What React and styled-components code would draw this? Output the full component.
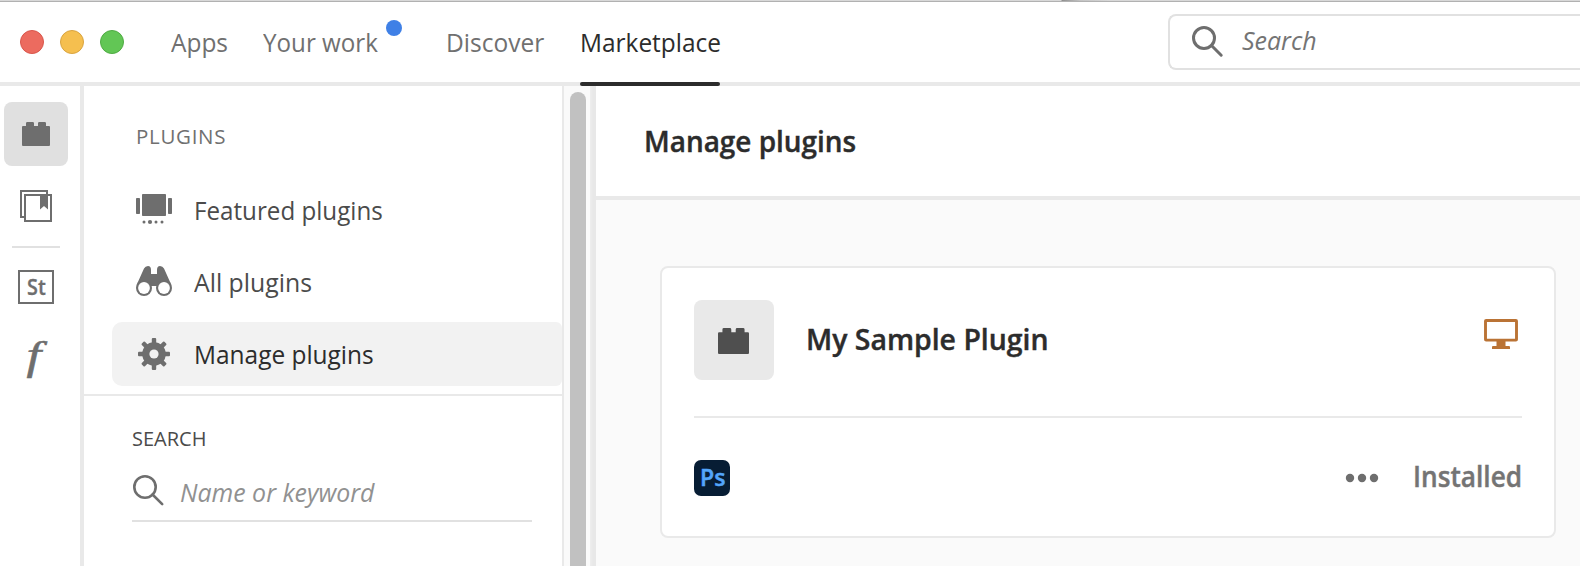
import React from 'react';
import styled, { createGlobalStyle } from 'styled-components';

const Global = createGlobalStyle`
  * { box-sizing: border-box; }
  html, body { margin: 0; background: #fff; overflow: hidden; }
  body { font-family: 'Open Sans', 'Noto Sans', sans-serif; color: #4b4b4b; }
  svg { display: block; flex: none; }
`;

const Window = styled.div`
  width: 1580px;
  height: 566px;
  display: flex;
  flex-direction: column;
  overflow: hidden;
`;

const Backdrop = styled.div`
  flex: none;
  height: 2px;
  border-bottom: 1px solid #b1b1b1;
  background: linear-gradient(90deg, #d8d8d8 1061px, #8f8f8f 1062px, #c4c4c4 1080px, #d8d8d8 1110px);
`;

const Header = styled.header`
  flex: none;
  height: 84px;
  display: flex;
  align-items: flex-start;
  border-bottom: 4px solid #e9e9e9;
`;

const Lights = styled.div`
  display: flex;
  align-items: center;
  gap: 16px;
  width: 171px;
  height: 80px;
  padding-left: 20px;
`;

const Light = styled.span`
  width: 24px;
  height: 24px;
  border-radius: 50%;
  background: ${p => p.$fill};
  border: 1px solid ${p => p.$edge};
`;

/* Condensed run of text; $stretch is the horizontal scale. */
const Label = styled.span`
  display: inline-block;
  white-space: pre;
  transform: scaleX(${p => p.$stretch || 1});
  transform-origin: left center;
`;

const Tabs = styled.nav`
  display: flex;
  flex: 1;
`;

const Tab = styled.a`
  position: relative;
  flex: none;
  width: ${p => p.$width}px;
  margin-right: ${p => p.$gap || 0}px;
  height: 84px;
  line-height: 80px;
  font-size: 26px;
  color: ${p => (p.$active ? '#2c2c2c' : '#707070')};
  &::after {
    content: '';
    display: ${p => (p.$active ? 'block' : 'none')};
    position: absolute;
    left: 0;
    right: 0;
    bottom: 0;
    height: 4px;
    border-radius: 2px;
    background: #2c2c2c;
  }
`;

const Unread = styled.i`
  position: absolute;
  top: 18px;
  right: -8px;
  width: 16px;
  height: 16px;
  border-radius: 50%;
  background: #3f80e6;
`;

const GlobalSearch = styled.div`
  flex: none;
  display: flex;
  align-items: center;
  gap: 18px;
  width: 412px;
  height: 56px;
  margin-top: 12px;
  padding: 0 0 4px 22px;
  border: 2px solid #e1e1e1;
  border-right: 0;
  border-radius: 8px 0 0 8px;
  font-size: 26px;
  line-height: 40px;
  font-style: italic;
  color: #747474;
  svg { margin-top: 4px; }
`;

const Body = styled.div`
  flex: 1;
  display: flex;
  min-height: 0;
`;

const Rail = styled.aside`
  flex: none;
  width: 84px;
  border-right: 4px solid #e9e9e9;
  padding: 16px 0 0 4px;
  display: flex;
  flex-direction: column;
`;

const RailItem = styled.div`
  width: 64px;
  height: 64px;
  margin-bottom: ${p => p.$after}px;
  display: flex;
  align-items: center;
  justify-content: center;
  border-radius: 8px;
  background: ${p => (p.$active ? '#e0e0e0' : 'transparent')};
  color: #6e6e6e;
`;

const RailRule = styled.hr`
  width: 48px;
  height: 2px;
  margin: 0 0 7px 8px;
  border: 0;
  background: #e1e1e1;
`;

const StockBadge = styled.span`
  width: 36px;
  height: 34px;
  border: 2px solid #6e6e6e;
  font-size: 22px;
  font-weight: 600;
  -webkit-text-stroke: 0.3px currentColor;
  line-height: 29px;
  padding-left: 7px;
`;

const FontGlyph = styled.span`
  font: italic 39px/58px 'Liberation Serif', serif;
  height: 64px;
  padding-right: 4px;
  transform: scaleX(1.35);
  -webkit-text-stroke: 0.5px #6e6e6e;
`;

const Side = styled.section`
  flex: none;
  width: 480px;
  border-right: 2px solid #e9e9e9;
`;

const SideHeading = styled.h2`
  margin: 0;
  padding: 34px 0 0 52px;
  height: 92px;
  font-size: 20.5px;
  font-weight: 400;
  line-height: 32px;
  letter-spacing: 0.7px;
  color: #707070;
`;

const SideNav = styled.div`
  display: flex;
  flex-direction: column;
  gap: 8px;
  padding: 0 0 8px 28px;
  border-bottom: 2px solid #e9e9e9;
`;

const SideItem = styled.a`
  display: flex;
  align-items: center;
  gap: 22px;
  height: 64px;
  padding-left: 24px;
  border-radius: 10px 6px 6px 10px;
  font-size: 26px;
  line-height: 64px;
  background: ${p => (p.$active ? '#f2f2f2' : 'transparent')};
  color: ${p => (p.$active ? '#2c2c2c' : '#4b4b4b')};
`;

const Filter = styled.div`
  padding: 27px 30px 0 48px;
`;

const FilterTitle = styled.div`
  height: 32px;
  font-size: 20px;
  line-height: 32px;
`;

const FilterField = styled.div`
  display: flex;
  align-items: center;
  gap: 15px;
  height: 67px;
  padding-top: 9px;
  border-bottom: 2px solid #e1e1e1;
  font-size: 26px;
  line-height: 40px;
  font-style: italic;
  color: #919191;
  svg { margin: -3px 0 0 1px; }
`;

const ScrollTrack = styled.div`
  flex: none;
  width: 32px;
  padding: 6px 0 0 6px;
  background: linear-gradient(90deg, #fafafa 26px, #eeeeee 26px, #e8e8e8 29px);
`;

const ScrollThumb = styled.div`
  width: 16px;
  height: 100%;
  border-radius: 8px 8px 0 0;
  background: #c1c1c1;
`;

const Main = styled.main`
  flex: 1;
  min-width: 0;
  background: #fafafa;
`;

const PageTitle = styled.h1`
  margin: 0;
  height: 114px;
  padding-left: 48px;
  border-bottom: 4px solid #e9e9e9;
  background: #fff;
  font-size: 29px;
  font-weight: 600;
  -webkit-text-stroke: 0.4px currentColor;
  line-height: 110px;
  color: #2c2c2c;
`;

const Card = styled.article`
  width: 896px;
  height: 272px;
  margin: 66px 0 0 64px;
  padding: 32px;
  border: 2px solid #e9e9e9;
  border-radius: 8px;
  background: #fff;
`;

const CardTop = styled.div`
  display: flex;
  align-items: center;
  height: 118px;
  padding-bottom: 36px;
  border-bottom: 2px solid #e9e9e9;
`;

const PluginTile = styled.div`
  width: 80px;
  height: 80px;
  display: flex;
  align-items: center;
  justify-content: center;
  padding: 2px 2px 0 0;
  border-radius: 8px;
  background: #e9e9e9;
  color: #4f4f4f;
`;

const PluginName = styled.h3`
  flex: 1;
  margin: 0;
  padding: 0 0 3px 32px;
  font-size: 29px;
  font-weight: 600;
  -webkit-text-stroke: 0.4px currentColor;
  line-height: 40px;
  color: #2c2c2c;
`;

const DesktopMark = styled.div`
  padding: 0 4px 12px 0;
`;

const CardBottom = styled.div`
  display: flex;
  align-items: center;
  height: 120px;
`;

const AppBadge = styled.span`
  width: 36px;
  height: 36px;
  margin-right: auto;
  padding-left: 6px;
  border-radius: 7px;
  background: #071d34;
  color: #53a6fb;
  font-size: 24px;
  font-weight: 600;
  -webkit-text-stroke: 0.5px currentColor;
  line-height: 33px;
`;

const Status = styled.span`
  width: 109px;
  margin-left: 34px;
  padding-bottom: 5px;
  font-size: 28px;
  font-weight: 600;
  -webkit-text-stroke: 0.4px currentColor;
  line-height: 40px;
  color: #747474;
`;

const Brick = ({ w = 28, h = 24 }) => (
  <svg width={w} height={h} viewBox="0 0 28 24" preserveAspectRatio="none" fill="currentColor">
    <path d="M4 4V1.3Q4 0 5.3 0H10.7Q12 0 12 1.3V4H16V1.3Q16 0 17.3 0H22.7Q24 0 24 1.3V4H27Q28 4 28 5V23Q28 24 27 24H1Q0 24 0 23V5Q0 4 1 4Z" />
  </svg>
);

const Library = () => (
  <svg width="32" height="32" viewBox="0 0 32 32">
    <path d="M4 27H1V1H27V4" fill="none" stroke="#6e6e6e" strokeWidth="2" />
    <rect x="5" y="5" width="26" height="26" fill="none" stroke="#6e6e6e" strokeWidth="2" />
    <path d="M20 4H28V19.5L24 16L20 19.5Z" fill="#6e6e6e" />
  </svg>
);

const Magnifier = ({ stroke }) => (
  <svg width="32" height="32" viewBox="0 0 32 32" fill="none" stroke="#6e6e6e" strokeWidth={stroke}>
    <circle cx="12" cy="12" r={12 - stroke / 2} />
    <path d="M19.5 19.5L29.2 29.2" strokeLinecap="round" />
  </svg>
);

const Carousel = () => (
  <svg width="36" height="36" viewBox="0 0 36 36" fill="#6e6e6e">
    <rect x="0" y="6" width="4" height="16" rx="0.8" />
    <rect x="6" y="2" width="24" height="22" rx="0.8" />
    <rect x="32" y="6" width="4" height="16" rx="0.8" />
    <circle cx="8" cy="30" r="1.5" />
    <circle cx="14" cy="30" r="2.1" />
    <circle cx="20" cy="30" r="1.5" />
    <circle cx="26" cy="30" r="1.5" />
  </svg>
);

const Binoculars = () => (
  <svg width="36" height="36" viewBox="0 -2 36 36" fill="#6e6e6e">
    <path d="M0.7 18.8L8 2.6Q9.3 0 12 0Q15 0 15 4V8H21V4Q21 0 24 0Q26.7 0 28 2.6L35.3 18.8L28 22L20.6 20H15.4L8 22Z" />
    <circle cx="8" cy="22" r="8" />
    <circle cx="28" cy="22" r="8" />
    <circle cx="8" cy="22" r="5.9" fill="#fff" />
    <circle cx="28" cy="22" r="5.9" fill="#fff" />
  </svg>
);

const Gear = () => (
  <svg width="36" height="36" viewBox="-18 -18 36 36" fill="#6e6e6e">
    {[0, 45, 90, 135].map(a => (
      <rect key={a} x="-2.2" y="-16" width="4.4" height="32" rx="1" transform={`rotate(${a})`} />
    ))}
    <circle r="11.8" />
    <circle r="4.6" fill="#f2f2f2" />
  </svg>
);

const Monitor = () => (
  <svg width="34" height="30" viewBox="0 0 34 30">
    <rect x="1.5" y="1.5" width="31" height="19.6" rx="0.6" fill="none" stroke="#ba7335" strokeWidth="2.9" />
    <path d="M12.5 21.5H21.5V27H25Q26 27 26 28V30H8V28Q8 27 9 27H12.5Z" fill="#ba7335" />
  </svg>
);

const More = () => (
  <svg width="34" height="10" viewBox="0 0 34 10" fill="#6e6e6e">
    <circle cx="5" cy="5" r="4.2" />
    <circle cx="17" cy="5" r="4.2" />
    <circle cx="29" cy="5" r="4.2" />
  </svg>
);

export default function App() {
  return (
    <Window>
      <Global />
      <Backdrop />
      <Header>
        <Lights>
          <Light $fill="#ec6b5f" $edge="#d9564b" />
          <Light $fill="#f5bf4f" $edge="#d9a440" />
          <Light $fill="#62c655" $edge="#4fab43" />
        </Lights>
        <Tabs>
          <Tab $width={58} $gap={34}><Label $stretch={0.94}>Apps</Label></Tab>
          <Tab $width={131} $gap={52}><Label $stretch={0.93}>Your work</Label><Unread /></Tab>
          <Tab $width={98} $gap={36}><Label $stretch={0.943}>Discover</Label></Tab>
          <Tab $width={140} $active><Label $stretch={0.94}>Marketplace</Label></Tab>
        </Tabs>
        <GlobalSearch>
          <Magnifier stroke={3} />
          <Label $stretch={0.96}>Search</Label>
        </GlobalSearch>
      </Header>
      <Body>
        <Rail>
          <RailItem $active $after={8}><Brick /></RailItem>
          <RailItem $after={8}><Library /></RailItem>
          <RailRule />
          <RailItem $after={8}><StockBadge><Label $stretch={0.9}>St</Label></StockBadge></RailItem>
          <RailItem $after={0}><FontGlyph>f</FontGlyph></RailItem>
        </Rail>
        <Side>
          <SideHeading>PLUGINS</SideHeading>
          <SideNav>
            <SideItem><Carousel /><Label $stretch={0.93}>Featured plugins</Label></SideItem>
            <SideItem><Binoculars /><Label $stretch={0.953}>All plugins</Label></SideItem>
            <SideItem $active><Gear /><Label $stretch={0.94}>Manage plugins</Label></SideItem>
          </SideNav>
          <Filter>
            <FilterTitle>SEARCH</FilterTitle>
            <FilterField>
              <Magnifier stroke={2.6} />
              <Label $stretch={0.957}>Name or keyword</Label>
            </FilterField>
          </Filter>
        </Side>
        <ScrollTrack><ScrollThumb /></ScrollTrack>
        <Main>
          <PageTitle><Label $stretch={0.963}>Manage plugins</Label></PageTitle>
          <Card>
            <CardTop>
              <PluginTile><Brick w={31} h={26} /></PluginTile>
              <PluginName><Label $stretch={0.98}>My Sample Plugin</Label></PluginName>
              <DesktopMark><Monitor /></DesktopMark>
            </CardTop>
            <CardBottom>
              <AppBadge><Label $stretch={0.96}>Ps</Label></AppBadge>
              <More />
              <Status><Label $stretch={0.937}>Installed</Label></Status>
            </CardBottom>
          </Card>
        </Main>
      </Body>
    </Window>
  );
}
